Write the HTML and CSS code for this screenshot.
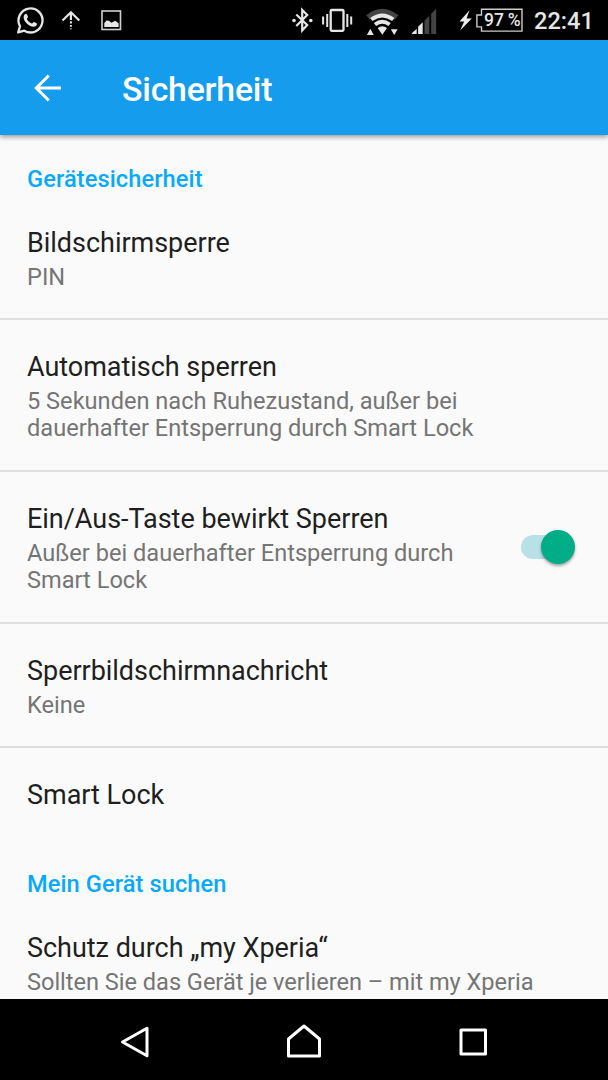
FILE: index.html
```html
<!DOCTYPE html>
<html lang="de">
<head>
<meta charset="utf-8">
<title>Sicherheit</title>
<link rel="stylesheet" href="styles.css">
</head>
<body>
<div class="screen">
  <div class="status-bar">
    <svg class="status-icons" width="140" height="41" viewBox="0 0 140 41" fill="none" stroke="#e6e6e6">
      <path d="M18.2 32.4l1.8-6.2A12 12 0 1 1 24.300 30.700z" stroke-width="2.300" stroke-linejoin="round"/>
      <path d="M24.800 14.300c.8-.8 1.800-.7 2.200.2l1 2.300c.2.600-1.300 1.800-1 2.400 1.100 2 2.600 3.500 4.800 4.300.7.200 1.600-1.800 2.300-1.500l2.500 1.200c.8.400.4 2-.7 2.900-2.300 1.800-6.100.2-8.800-2.300-2.700-2.500-4.900-6.500-2.300-9.500z" fill="#e6e6e6" stroke="none"/>
      <path d="M62.500 20.500l8.400-8.300 8.400 8.300M70.900 12.500v7.500" stroke-width="2.200"/>
      <path d="M70.900 21.200v2.200M70.900 25v1.800" stroke-width="2"/>
      <path d="M70.900 28v1.500" stroke="#777" stroke-width="2"/>
      <rect x="102" y="11" width="18.500" height="18.500" stroke="#cfcfcf" stroke-width="1.600"/>
      <path d="M104.300 27v-4l2.200-2.500 2.400.2 2.600 2 3.600-2 3.500 2.500V27z" fill="#e6e6e6" stroke="none"/>
    </svg>
    <svg class="status-icons" width="160" height="41" viewBox="285 0 160 41" fill="none" stroke="#e6e6e6">
      <path d="M296.300 14.500l10.900 10.500-5 5.500V10l5 5-10.900 11" stroke-width="2.200"/>
      <circle cx="294" cy="20.500" r="1.800" fill="#e6e6e6" stroke="none"/>
      <circle cx="310.800" cy="20.500" r="1.800" fill="#e6e6e6" stroke="none"/>
      <rect x="330.700" y="10" width="12.800" height="20.800" rx="1" stroke-width="2.300"/>
      <path d="M327.200 14v13M347.300 14v13" stroke-width="2"/>
      <path d="M323.100 16.500v8M351.200 16.500v8" stroke-width="2"/>
      <path d="M366.100 15.200Q382.300 2.200 398.500 15.200L394.900 19.600Q382.300 9 369.700 19.600z" fill="#444" stroke="none"/>
      <g stroke-width="3.800"><path d="M371.300 19.600Q382.300 11.300 393.300 19.600"/><path d="M375 24.600Q382.300 18.800 389.600 24.600"/></g>
      <path d="M377.700 28Q382.300 24.500 387 28L382.300 34.800z" fill="#e6e6e6" stroke="none"/>
      <path d="M366.900 35l3.400-6.300 3.400 6.300zM390.800 29.200h6.800l-3.400 5.900z" fill="#e6e6e6" stroke="none"/>
      <path d="M411.800 34v-.7l4.900-4.500V34zM418.100 34v-7.300l4.600-4.400V34z" fill="#e6e6e6" stroke="none"/>
      <path d="M424.500 34V20.400l4.800-4.700V34zM431.200 34V13.800l5-5V34z" fill="#444" stroke="none"/>
    </svg>
    <div class="battery">
      <svg width="66" height="41" viewBox="458 0 66 41">
        <path d="M469.500 10.200L459.500 21.600h4.700l-4.100 9 11.700-12h-5.300z" fill="#eee"/>
        <path d="M481.500 9.200H522v21.900h-40.500v-4.200h-4.600V15h4.600z" fill="none" stroke="#ccc" stroke-width="1.400"/>
      </svg>
      <span class="battery-level">97 %</span>
    </div>
    <span class="clock">22:41</span>
  </div>

  <header class="app-bar">
    <svg class="back" width="28" height="28" viewBox="0 0 28 28" fill="none" stroke="#fff" stroke-width="3"><path d="M14.800 1.500L2.300 14l12.500 12.500M2.300 14H27"/></svg>
    <h1 class="app-title">Sicherheit</h1>
  </header>

  <main class="settings">
    <h2 class="category">Gerätesicherheit</h2>
    <div class="row">
      <div class="row-text"><div class="title">Bildschirmsperre</div><div class="summary">PIN</div></div>
    </div>
    <div class="row divided">
      <div class="row-text"><div class="title">Automatisch sperren</div><div class="summary">5 Sekunden nach Ruhezustand, außer bei<br>dauerhafter Entsperrung durch Smart Lock</div></div>
    </div>
    <div class="row divided">
      <div class="row-text"><div class="title">Ein/Aus-Taste bewirkt Sperren</div><div class="summary">Außer bei dauerhafter Entsperrung durch<br>Smart Lock</div></div>
      <div class="switch"><div class="track"></div><div class="thumb"></div></div>
    </div>
    <div class="row divided">
      <div class="row-text"><div class="title">Sperrbildschirmnachricht</div><div class="summary">Keine</div></div>
    </div>
    <div class="row divided">
      <div class="row-text"><div class="title">Smart Lock</div></div>
    </div>
    <h2 class="category">Mein Gerät suchen</h2>
    <div class="row">
      <div class="row-text"><div class="title">Schutz durch „my Xperia“</div><div class="summary long">Sollten Sie das Gerät je verlieren – mit my Xperia</div></div>
    </div>
  </main>

  <nav class="nav-bar">
    <svg width="36" height="40" viewBox="0 0 36 40"><path d="M5.500 20L30 6.300v27.400z"/></svg>
    <svg width="36" height="40" viewBox="0 0 36 40"><path d="M2.500 34V17L18 4l15.500 13v17z"/></svg>
    <svg width="36" height="40" viewBox="0 0 36 40"><path d="M6 8h24.500v24H6z"/></svg>
  </nav>
</div>
</body>
</html>
```
FILE: styles.css
```css
* { box-sizing: border-box; }

body {
  margin: 0;
  background: #000;
  font-family: Roboto, "Noto Sans", sans-serif;
}

.screen {
  width: 608px;
  height: 1080px;
  display: flex;
  flex-direction: column;
  overflow: hidden;
}

.status-bar {
  flex: none;
  height: 40.4px;
  display: flex;
  background: #000;
  color: #e6e6e6;
}

.status-bar svg { display: block; flex: none; }
.status-icons + .status-icons { margin-left: 145px; }

.battery { margin-left: 13px; position: relative; }

.battery-level {
  position: absolute;
  left: 26px;
  top: 9px;
  font-size: 17.500px;
  line-height: 22px;
  font-weight: 500;
  word-spacing: -0.5px;
  white-space: nowrap;
}

.clock {
  margin-left: 10px;
  font-size: 23.600px;
  line-height: 42px;
  font-weight: 500;
}

.app-bar {
  flex: none;
  height: 94.600px;
  padding-left: 34px;
  display: flex;
  align-items: center;
  background: #169cec;
  color: #fff;
  box-shadow: 0 2px 5px rgba(0, 0, 0, 0.4);
  position: relative;
}

.app-title {
  margin: 4px 0 0 60px;
  font-size: 33.800px;
  line-height: 40px;
  font-weight: 500;
  letter-spacing: -0.2px;
}

.settings {
  flex: 1;
  min-height: 0;
  overflow: hidden;
  background: #fafafa;
}

.category {
  margin: 0;
  padding: 30.400px 27px 2px;
  font-size: 23.600px;
  line-height: 28px;
  font-weight: 500;
  letter-spacing: 0.1px;
  color: #06a9fc;
}

.row + .category { padding-top: 32px; }

.row {
  padding: 31px 33px 27px 27px;
  display: flex;
  align-items: center;
  justify-content: space-between;
}

.category + .row {
  padding-top: 31.600px;
  padding-bottom: 26.400px;
}

.divided { border-top: 2px solid #dedede; }

.title {
  font-size: 27px;
  line-height: 32px;
  letter-spacing: -0.03px;
  color: #1f1f1f;
  white-space: nowrap;
}

.summary {
  margin-top: 5px;
  font-size: 23.600px;
  line-height: 27.500px;
  color: #757575;
  white-space: nowrap;
}

.long { letter-spacing: -0.03px; }

.switch {
  margin-bottom: 4px;
  display: grid;
  grid-template-columns: 54px;
  align-items: center;
}

.track,
.thumb {
  grid-area: 1 / 1;
}

.track {
  width: 44px;
  height: 24px;
  border-radius: 12px;
  background: #b9dfe7;
}

.thumb {
  justify-self: end;
  width: 34px;
  height: 34px;
  border-radius: 50%;
  background: #00ad87;
  box-shadow: 0 2px 3px rgba(0, 0, 0, 0.35);
}

.nav-bar {
  flex: none;
  height: 81px;
  padding: 5px 117px 0 117px;
  display: flex;
  align-items: center;
  justify-content: space-between;
  background: #000;
}

.nav-bar svg {
  fill: none;
  stroke: #fff;
  stroke-width: 3;
  stroke-linejoin: round;
}
```
